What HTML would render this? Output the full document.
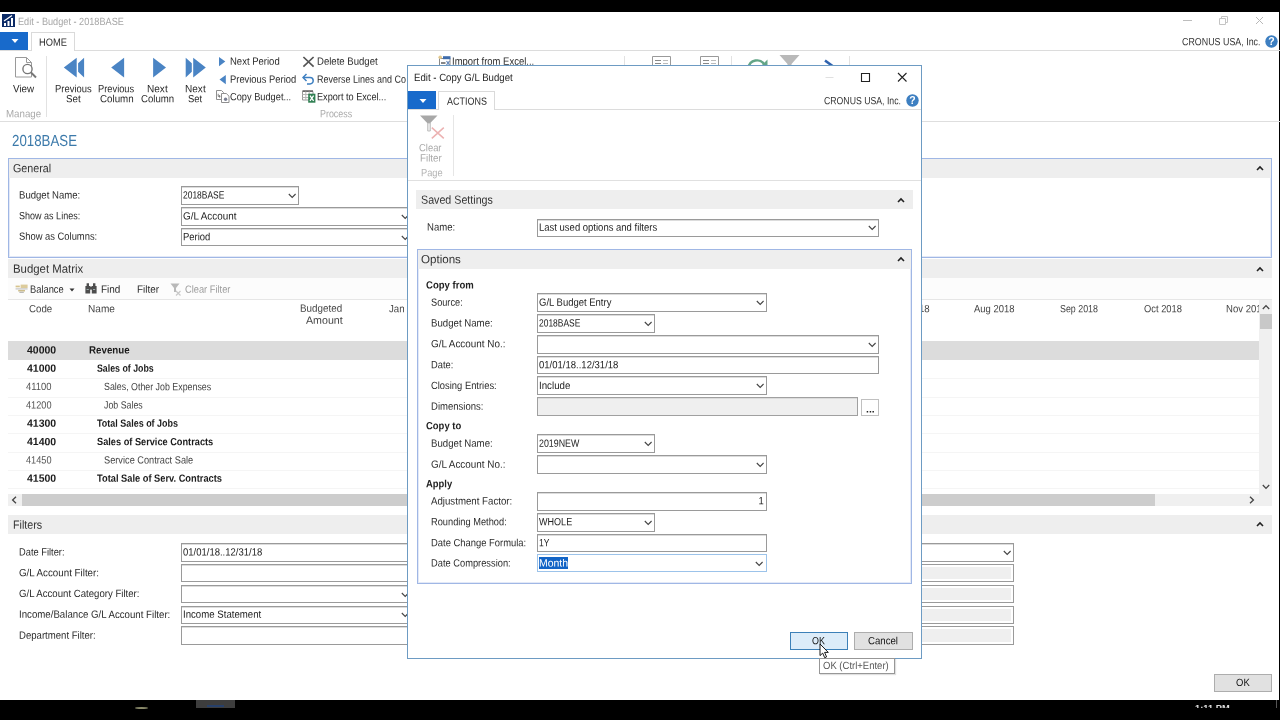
<!DOCTYPE html>
<html lang="en"><head><meta charset="utf-8"><title>Edit - Budget - 2018BASE</title>
<style>
html,body{margin:0;padding:0;background:#fff;}
body{width:1280px;height:720px;position:relative;overflow:hidden;font-family:"Liberation Sans",sans-serif;}
.b{position:absolute;display:block;}
.t{position:absolute;white-space:nowrap;line-height:1;display:block;}
#w{position:absolute;left:0;top:0;width:1280px;height:720px;will-change:transform;}
</style></head>
<body>
<div id="w">
<div class="b" style="left:0px;top:0px;width:1280px;height:12px;background:#000;"></div>
<div class="b" style="left:0px;top:700px;width:1280px;height:20px;background:#000;"></div>
<div class="b" style="left:196px;top:700px;width:38.5px;height:8px;background:#3d3d3d;"></div>
<div class="b" style="left:207px;top:705px;width:17px;height:2px;background:#27406a;"></div>
<div class="b" style="left:1279px;top:12px;width:1px;height:688px;background:#000;"></div>
<svg class="b" style="left:2px;top:14px;" width="13" height="13" viewBox="0 0 13 13"><rect x="0" y="0" width="13" height="13" fill="#0b2a66"/><path d="M2 12V9h2v3zM5.5 12V7h2v5zM9 12V4h2v8z" fill="#fff"/><path d="M2 7L10 1.5" stroke="#fff" stroke-width="1.2"/></svg>
<span class="t" style="left:18.20px;top:16.00px;font-size:10.5px;color:#a6a6a6;transform:matrix(0.8723,0.0005,0,1,0,0.03);transform-origin:0 50%;">Edit - Budget - 2018BASE</span>
<svg class="b" style="left:1180px;top:14px;" width="90" height="14" viewBox="0 0 90 14"><path d="M3 6.5h9" stroke="#bdbdbd" stroke-width="1"/><path d="M39.5 4.5h6v6h-6z M41.5 4.5v-2h6v6h-2" stroke="#c4c4c4" fill="none" stroke-width="1"/><path d="M76 3l7 7M83 3l-7 7" stroke="#b8b8b8" stroke-width="1"/></svg>
<div class="b" style="left:0px;top:32px;width:28px;height:18px;background:#186acb;"></div>
<svg class="b" style="left:11px;top:38px;" width="8" height="6" viewBox="0 0 8 6"><path d="M0.5 1h7L4 5z" fill="#fff"/></svg>
<div class="b" style="left:0px;top:50px;width:1280px;height:1px;background:#dcdcdc;"></div>
<div class="b" style="left:31px;top:32px;width:44px;height:19px;background:#fff;border:1px solid #dadada;box-sizing:border-box;border-bottom:none;"></div>
<span class="t" style="left:39.10px;top:36.00px;font-size:10.5px;color:#2b2b2b;transform:matrix(0.8889,0.0005,0,1,0,0.63);transform-origin:0 50%;">HOME</span>
<span class="t" style="left:1182.40px;top:36.00px;font-size:10.5px;color:#333;transform:matrix(0.8461,0.0005,0,1,0,0.13);transform-origin:0 50%;">CRONUS USA, Inc.</span>
<svg class="b" style="left:1264px;top:34px;" width="15" height="15" viewBox="0 0 15 15"><circle cx="7.5" cy="7.5" r="6.2" fill="#3d7fc1"/><text x="7.5" y="11.3" font-size="10.5" font-weight="bold" fill="#fff" text-anchor="middle" font-family="Liberation Sans, sans-serif">?</text></svg>
<div class="b" style="left:0px;top:121px;width:1280px;height:1px;background:#dedede;"></div>
<div class="b" style="left:46px;top:56px;width:1px;height:61px;background:#e2e2e2;"></div>
<svg class="b" style="left:14px;top:56px;" width="24" height="24" viewBox="0 0 24 24"><path d="M1.5 1.5h11l5 5v14.5h-16z" fill="#fff" stroke="#9a9a9a" stroke-width="1"/><path d="M12.5 1.5v5h5" fill="none" stroke="#9a9a9a" stroke-width="1"/><circle cx="13.5" cy="13" r="4.6" fill="#fff" stroke="#777" stroke-width="1.4"/><path d="M17 16.5l5 5" stroke="#777" stroke-width="2"/></svg>
<span class="t" style="left:13.40px;top:83.00px;font-size:10.5px;color:#2b2b2b;transform:matrix(0.9390,0.0005,0,1,0,0.13);transform-origin:0 50%;">View</span>
<span class="t" style="left:6.40px;top:108.00px;font-size:10.5px;color:#aaa;transform:matrix(0.9275,0.0005,0,1,0,0.13);transform-origin:0 50%;">Manage</span>
<svg class="b" style="left:62px;top:56px;" width="26" height="24" viewBox="0 0 26 24"><path d="M1.8 11.5L14.7 1.7v19.7z M16.1 7.2L22.1 1.7v19.7L16.1 15.8z" fill="#4a84c4"/></svg>
<span class="t" style="left:54.90px;top:83.00px;font-size:10.5px;color:#2b2b2b;transform:matrix(0.8982,0.0005,0,1,0,0.13);transform-origin:0 50%;">Previous</span>
<span class="t" style="left:66.40px;top:93.00px;font-size:10.5px;color:#2b2b2b;transform:matrix(0.9324,0.0005,0,1,0,0.13);transform-origin:0 50%;">Set</span>
<svg class="b" style="left:109px;top:56px;" width="18" height="24" viewBox="0 0 18 24"><path d="M2.2 11.5L15.1 1.7v19.7z" fill="#4a84c4"/></svg>
<span class="t" style="left:98.40px;top:83.00px;font-size:10.5px;color:#2b2b2b;transform:matrix(0.8860,0.0005,0,1,0,0.13);transform-origin:0 50%;">Previous</span>
<span class="t" style="left:99.90px;top:93.00px;font-size:10.5px;color:#2b2b2b;transform:matrix(0.9313,0.0005,0,1,0,0.13);transform-origin:0 50%;">Column</span>
<svg class="b" style="left:150px;top:56px;" width="18" height="24" viewBox="0 0 18 24"><path d="M16 11.5L3.1 1.7v19.7z" fill="#4a84c4"/></svg>
<span class="t" style="left:147.40px;top:83.00px;font-size:10.5px;color:#2b2b2b;transform:matrix(0.9586,0.0005,0,1,0,0.13);transform-origin:0 50%;">Next</span>
<span class="t" style="left:141.40px;top:93.00px;font-size:10.5px;color:#2b2b2b;transform:matrix(0.9174,0.0005,0,1,0,0.13);transform-origin:0 50%;">Column</span>
<svg class="b" style="left:183px;top:56px;" width="26" height="24" viewBox="0 0 26 24"><path d="M22.8 11.5L10.2 1.7v19.7z M8.8 7.2L2.7 1.7v19.7L8.8 15.8z" fill="#4a84c4"/></svg>
<span class="t" style="left:184.90px;top:83.00px;font-size:10.5px;color:#2b2b2b;transform:matrix(0.9586,0.0005,0,1,0,0.13);transform-origin:0 50%;">Next</span>
<span class="t" style="left:188.40px;top:93.00px;font-size:10.5px;color:#2b2b2b;transform:matrix(0.9007,0.0005,0,1,0,0.13);transform-origin:0 50%;">Set</span>
<svg class="b" style="left:219px;top:57px;" width="7" height="10" viewBox="0 0 7 10"><path d="M0 0L6.3 4.6L0 9.2z" fill="#4a84c4"/></svg>
<span class="t" style="left:230.40px;top:55.00px;font-size:10.5px;color:#2b2b2b;transform:matrix(0.9060,0.0005,0,1,0,0.63);transform-origin:0 50%;">Next Period</span>
<svg class="b" style="left:219px;top:74.5px;" width="7" height="10" viewBox="0 0 7 10"><path d="M6.8 0L0.5 4.6L6.8 9.2z" fill="#4a84c4"/></svg>
<span class="t" style="left:230.40px;top:73.00px;font-size:10.5px;color:#2b2b2b;transform:matrix(0.8931,0.0005,0,1,0,0.63);transform-origin:0 50%;">Previous Period</span>
<svg class="b" style="left:216px;top:90px;" width="14" height="13" viewBox="0 0 14 13"><path d="M0.5 0.5h5l2 2v7h-7z" fill="#fff" stroke="#8f8f8f"/><path d="M2.2 3.8v2.6h2.2M3.6 5v2.6" stroke="#777" stroke-width=".9" fill="none"/><path d="M5.5 3.5h4.8l2.7 2.7v6.3h-7.5z" fill="#fff" stroke="#8f8f8f"/><circle cx="9.6" cy="9.3" r="1.7" fill="#7a7f92"/></svg>
<span class="t" style="left:230.40px;top:91.00px;font-size:10.5px;color:#2b2b2b;transform:matrix(0.8810,0.0005,0,1,0,0.13);transform-origin:0 50%;">Copy Budget...</span>
<svg class="b" style="left:302px;top:56px;" width="13" height="12" viewBox="0 0 13 12"><path d="M1.4 1l10.2 9.6M11.6 1L1.4 10.6" stroke="#555" stroke-width="1.7"/></svg>
<span class="t" style="left:316.90px;top:55.00px;font-size:10.5px;color:#2b2b2b;transform:matrix(0.9119,0.0005,0,1,0,0.63);transform-origin:0 50%;">Delete Budget</span>
<svg class="b" style="left:302px;top:73px;" width="13" height="12" viewBox="0 0 13 12"><path d="M4.5 1L1 4.5L4.5 8" fill="none" stroke="#3d7fc1" stroke-width="1.5"/><path d="M1.5 4.5h6.5a3.2 3.2 0 0 1 0 6.4H5" fill="none" stroke="#3d7fc1" stroke-width="1.5"/></svg>
<span class="t" style="left:316.90px;top:73.00px;font-size:10.5px;color:#2b2b2b;transform:matrix(0.8565,0.0005,0,1,0,0.63);transform-origin:0 50%;">Reverse Lines and Co</span>
<svg class="b" style="left:302px;top:90px;" width="14" height="13" viewBox="0 0 14 13"><path d="M0.5 1.5h10.5v8.5h-10.5z" fill="#fff" stroke="#999"/><path d="M0.5 1h10.5" stroke="#555" stroke-width="1.4"/><path d="M0.5 4.5h10.5M0.5 7.5h6M3.8 1.5v8.5M7.2 1.5v3" stroke="#b5b5b5"/><rect x="6.2" y="3.7" width="7.2" height="9" fill="#2f7f52"/><path d="M8 5.6l3.6 5.2M11.6 5.6L8 10.8" stroke="#fff" stroke-width="1.3"/></svg>
<span class="t" style="left:316.90px;top:91.00px;font-size:10.5px;color:#2b2b2b;transform:matrix(0.8718,0.0005,0,1,0,0.13);transform-origin:0 50%;">Export to Excel...</span>
<span class="t" style="left:320.40px;top:108.00px;font-size:10.5px;color:#aaa;transform:matrix(0.8488,0.0005,0,1,0,0.13);transform-origin:0 50%;">Process</span>
<svg class="b" style="left:438px;top:55px;" width="13" height="12" viewBox="0 0 13 12"><path d="M1.5 3.5h10.5v8h-10.5z" fill="#fff" stroke="#8a8a8a"/><rect x="5" y="1.2" width="7.5" height="3" fill="#3f6cab"/><path d="M3 8h4.5" stroke="#444" stroke-width="1.3"/><path d="M8.5 6l3 4M11.5 6l-3 4" stroke="#5a7fb5" stroke-width="1.1"/><circle cx="2.2" cy="2.2" r="1.8" fill="#e3c98e"/></svg>
<span class="t" style="left:452.40px;top:55.00px;font-size:10.5px;color:#2b2b2b;transform:matrix(0.9030,0.0005,0,1,0,0.63);transform-origin:0 50%;">Import from Excel...</span>
<div class="b" style="left:624px;top:56px;width:1px;height:61px;background:#e2e2e2;"></div>
<svg class="b" style="left:652px;top:56px;" width="19" height="12" viewBox="0 0 19 12"><path d="M0.5 0.5h18v12h-18z" fill="#fff" stroke="#9a9a9a"/><path d="M3 4.5h6M3 7.5h6" stroke="#888"/><path d="M11 4.5h5M11 7.5h5" stroke="#bbb"/></svg>
<svg class="b" style="left:700px;top:56px;" width="19" height="12" viewBox="0 0 19 12"><path d="M0.5 0.5h18v12h-18z" fill="#fff" stroke="#9a9a9a"/><path d="M3 4.5h6M3 7.5h6" stroke="#888"/><path d="M11 4.5h5M11 7.5h5" stroke="#bbb"/></svg>
<div class="b" style="left:731px;top:56px;width:1px;height:61px;background:#e2e2e2;"></div>
<svg class="b" style="left:746px;top:55px;" width="24" height="14" viewBox="0 0 24 14"><path d="M2.5 13a8.5 8.5 0 0 1 16-3" fill="none" stroke="#63a587" stroke-width="2.4"/><path d="M21.5 4.5v7h-7z" fill="#63a587"/></svg>
<svg class="b" style="left:779px;top:54px;" width="22" height="14" viewBox="0 0 22 14"><path d="M0.5 1h20l-8 9v4h-4v-4z" fill="#b9b9b9"/></svg>
<svg class="b" style="left:822px;top:58px;" width="16" height="10" viewBox="0 0 16 10"><path d="M3 2.5l11 8" stroke="#2f62ae" stroke-width="2.6"/></svg>
<div class="b" style="left:849px;top:56px;width:1px;height:61px;background:#e2e2e2;"></div>
<span class="t" style="left:11.90px;top:133.00px;font-size:16px;color:#3b79aa;transform:matrix(0.8303,0.0005,0,1,0,0.00);transform-origin:0 50%;">2018BASE</span>
<div class="b" style="left:8px;top:158px;width:1264px;height:100px;background:#fff;border:1px solid #a0b7e5;box-sizing:border-box;box-shadow:inset 0 0 0 1px #e3e9f7;"></div>
<div class="b" style="left:9px;top:159px;width:1262px;height:19px;background:#eeeeee;"></div>
<span class="t" style="left:13.40px;top:163.00px;font-size:11.9px;color:#333;transform:matrix(0.9028,0.0005,0,1,0,0.13);transform-origin:0 50%;">General</span>
<svg class="b" style="left:1256px;top:165px;" width="8" height="7" viewBox="0 0 8 7"><path d="M1 5L4 2L7 5" fill="none" stroke="#222" stroke-width="1.6"/></svg>
<span class="t" style="left:18.90px;top:189.00px;font-size:10.5px;color:#2b2b2b;transform:matrix(0.9117,0.0005,0,1,0,0.43);transform-origin:0 50%;">Budget Name:</span>
<div class="b" style="left:181px;top:186px;width:118px;height:19px;background:#fff;border:1px solid #9a9a9a;box-sizing:border-box;box-shadow:inset 0 1px 0 #dcdcdc;"></div>
<svg class="b" style="left:287.5px;top:193.04999999999998px;" width="8.4" height="6" viewBox="0 0 8.4 6"><path d="M0.8 1l3.4 3.4L7.6 1" fill="none" stroke="#444" stroke-width="1.1"/></svg>
<span class="t" style="left:183.20px;top:189.00px;font-size:10.5px;color:#222;transform:matrix(0.8058,0.0005,0,1,0,0.58);transform-origin:0 50%;">2018BASE</span>
<span class="t" style="left:18.90px;top:210.00px;font-size:10.5px;color:#2b2b2b;transform:matrix(0.8593,0.0005,0,1,0,0.13);transform-origin:0 50%;">Show as Lines:</span>
<div class="b" style="left:181px;top:207px;width:231px;height:19px;background:#fff;border:1px solid #9a9a9a;box-sizing:border-box;box-shadow:inset 0 1px 0 #dcdcdc;"></div>
<svg class="b" style="left:400.5px;top:213.9px;" width="8.4" height="6" viewBox="0 0 8.4 6"><path d="M0.8 1l3.4 3.4L7.6 1" fill="none" stroke="#444" stroke-width="1.1"/></svg>
<span class="t" style="left:183.20px;top:210.00px;font-size:10.5px;color:#222;transform:matrix(0.9399,0.0005,0,1,0,0.43);transform-origin:0 50%;">G/L Account</span>
<span class="t" style="left:18.90px;top:230.00px;font-size:10.5px;color:#2b2b2b;transform:matrix(0.8932,0.0005,0,1,0,0.63);transform-origin:0 50%;">Show as Columns:</span>
<div class="b" style="left:181px;top:228px;width:231px;height:18px;background:#fff;border:1px solid #9a9a9a;box-sizing:border-box;box-shadow:inset 0 1px 0 #dcdcdc;"></div>
<svg class="b" style="left:400.5px;top:234.70000000000002px;" width="8.4" height="6" viewBox="0 0 8.4 6"><path d="M0.8 1l3.4 3.4L7.6 1" fill="none" stroke="#444" stroke-width="1.1"/></svg>
<span class="t" style="left:183.20px;top:231.00px;font-size:10.5px;color:#222;transform:matrix(0.9025,0.0005,0,1,0,0.23);transform-origin:0 50%;">Period</span>
<div class="b" style="left:8px;top:258.5px;width:1264px;height:19.69999999999999px;background:#eeeeee;"></div>
<span class="t" style="left:13.40px;top:263.00px;font-size:11.9px;color:#333;transform:matrix(0.9569,0.0005,0,1,0,0.63);transform-origin:0 50%;">Budget Matrix</span>
<svg class="b" style="left:1256px;top:265.5px;" width="8" height="7" viewBox="0 0 8 7"><path d="M1 5L4 2L7 5" fill="none" stroke="#222" stroke-width="1.6"/></svg>
<div class="b" style="left:8px;top:278.2px;width:1264px;height:20.80000000000001px;background:#fcfcfc;"></div>
<svg class="b" style="left:15px;top:284px;" width="14" height="10" viewBox="0 0 14 10"><rect x="0.6" y="1.6" width="4.2" height="1.7" fill="#d6c38c"/><rect x="5.6" y="0.6" width="7" height="3.4" fill="#dccb9b"/><rect x="0.6" y="4.4" width="12" height="1" fill="#b9b9b9"/><rect x="3.2" y="5.9" width="6.8" height="1.6" fill="#cdbd8a"/><rect x="4.4" y="7.8" width="4.4" height="1" fill="#a9a9a9"/></svg>
<span class="t" style="left:29.90px;top:283.00px;font-size:10.5px;color:#2b2b2b;transform:matrix(0.8879,0.0005,0,1,0,0.63);transform-origin:0 50%;">Balance</span>
<svg class="b" style="left:69px;top:288px;" width="6" height="4" viewBox="0 0 6 4"><path d="M0.5 0.5h5L3 3.5z" fill="#333"/></svg>
<svg class="b" style="left:85px;top:283px;" width="13" height="11" viewBox="0 0 13 11"><path d="M1.6 0.3h2.4v2.7h1.2v7.6H0.4V3h1.2z M8 0.3h2.4v2.7h1.2v7.6H6.8V3H8z" fill="#4d4d4d"/><rect x="5" y="3.6" width="2" height="3" fill="#4d4d4d"/><path d="M1.6 6.5h2.2M8 6.5h2.2" stroke="#9aa" stroke-width="1"/></svg>
<span class="t" style="left:101.20px;top:283.00px;font-size:10.5px;color:#2b2b2b;transform:matrix(0.9492,0.0005,0,1,0,0.63);transform-origin:0 50%;">Find</span>
<span class="t" style="left:136.90px;top:283.00px;font-size:10.5px;color:#2b2b2b;transform:matrix(0.9424,0.0005,0,1,0,0.63);transform-origin:0 50%;">Filter</span>
<svg class="b" style="left:170px;top:283px;" width="12" height="13" viewBox="0 0 12 13"><path d="M0.5 0.5h9l-3.5 4.5v4h-2v-4z" fill="#b9b9b9"/><path d="M6 8l4.5 4.5M10.5 8L6 12.5" stroke="#c9c9c9" stroke-width="1.2"/></svg>
<span class="t" style="left:185.20px;top:283.00px;font-size:10.5px;color:#9b9b9b;transform:matrix(0.8842,0.0005,0,1,0,0.63);transform-origin:0 50%;">Clear Filter</span>
<div class="b" style="left:8px;top:298.5px;width:1264px;height:1.0px;background:#e6e6e6;"></div>
<div class="b" style="left:8px;top:299.5px;width:1251px;height:194.0px;background:#fff;"></div>
<span class="t" style="left:29.40px;top:303.00px;font-size:10.5px;color:#454545;transform:matrix(0.9240,0.0005,0,1,0,0.13);transform-origin:0 50%;">Code</span>
<span class="t" style="left:88.20px;top:303.00px;font-size:10.5px;color:#454545;transform:matrix(0.9602,0.0005,0,1,0,0.13);transform-origin:0 50%;">Name</span>
<span class="t" style="left:300.20px;top:302.00px;font-size:10.5px;color:#454545;transform:matrix(0.9384,0.0005,0,1,0,0.83);transform-origin:0 50%;">Budgeted</span>
<span class="t" style="left:305.70px;top:314.00px;font-size:10.5px;color:#454545;transform:matrix(1.0142,0.0005,0,1,0,0.73);transform-origin:0 50%;">Amount</span>
<span class="t" style="left:389.40px;top:303.00px;font-size:10.5px;color:#454545;transform:matrix(0.9200,0.0005,0,1,0,0.13);transform-origin:0 50%;">Jan 2018</span>
<span class="t" style="left:890.30px;top:303.00px;font-size:10.5px;color:#454545;transform:matrix(0.9200,0.0005,0,1,0,0.13);transform-origin:100% 50%;">Jul 2018</span>
<span class="t" style="left:973.90px;top:303.00px;font-size:10.5px;color:#454545;transform:matrix(0.9006,0.0005,0,1,0,0.13);transform-origin:0 50%;">Aug 2018</span>
<span class="t" style="left:1060.20px;top:303.00px;font-size:10.5px;color:#454545;transform:matrix(0.8450,0.0005,0,1,0,0.13);transform-origin:0 50%;">Sep 2018</span>
<span class="t" style="left:1144.40px;top:303.00px;font-size:10.5px;color:#454545;transform:matrix(0.8915,0.0005,0,1,0,0.13);transform-origin:0 50%;">Oct 2018</span>
<span class="t" style="left:1225.70px;top:303.00px;font-size:10.5px;color:#454545;transform:matrix(0.9098,0.0005,0,1,0,0.13);transform-origin:0 50%;">Nov 2018</span>
<div class="b" style="left:8px;top:341px;width:1251px;height:18.600000000000023px;background:#dcdcdc;"></div>
<div class="b" style="left:8px;top:378.0px;width:1251px;height:1.0px;background:#f5f5f5;"></div>
<div class="b" style="left:8px;top:396.5px;width:1251px;height:1.0px;background:#f5f5f5;"></div>
<div class="b" style="left:8px;top:414.5px;width:1251px;height:1.0px;background:#f5f5f5;"></div>
<div class="b" style="left:8px;top:433.0px;width:1251px;height:1.0px;background:#f5f5f5;"></div>
<div class="b" style="left:8px;top:451.5px;width:1251px;height:1.0px;background:#f5f5f5;"></div>
<div class="b" style="left:8px;top:469.5px;width:1251px;height:1.0px;background:#f5f5f5;"></div>
<div class="b" style="left:8px;top:488.0px;width:1251px;height:1.0px;background:#f5f5f5;"></div>
<span class="t" style="left:26.90px;top:344.00px;font-size:10.5px;color:#1a1a1a;transform:matrix(0.9999,0.0005,0,1,0,0.42);transform-origin:0 50%;font-weight:bold;">40000</span>
<span class="t" style="left:89.20px;top:344.00px;font-size:10.5px;color:#1a1a1a;transform:matrix(0.9296,0.0005,0,1,0,0.42);transform-origin:0 50%;font-weight:bold;">Revenue</span>
<span class="t" style="left:26.90px;top:362.00px;font-size:10.5px;color:#1a1a1a;transform:matrix(0.9999,0.0005,0,1,0,0.76);transform-origin:0 50%;font-weight:bold;">41000</span>
<span class="t" style="left:96.90px;top:362.00px;font-size:10.5px;color:#1a1a1a;transform:matrix(0.8375,0.0005,0,1,0,0.76);transform-origin:0 50%;font-weight:bold;">Sales of Jobs</span>
<span class="t" style="left:26.40px;top:381.00px;font-size:10.5px;color:#555;transform:matrix(0.8972,0.0005,0,1,0,0.11);transform-origin:0 50%;">41100</span>
<span class="t" style="left:104.40px;top:381.00px;font-size:10.5px;color:#444;transform:matrix(0.8424,0.0005,0,1,0,0.11);transform-origin:0 50%;">Sales, Other Job Expenses</span>
<span class="t" style="left:26.40px;top:399.00px;font-size:10.5px;color:#555;transform:matrix(0.8732,0.0005,0,1,0,0.45);transform-origin:0 50%;">41200</span>
<span class="t" style="left:104.40px;top:399.00px;font-size:10.5px;color:#444;transform:matrix(0.8390,0.0005,0,1,0,0.45);transform-origin:0 50%;">Job Sales</span>
<span class="t" style="left:26.90px;top:417.00px;font-size:10.5px;color:#1a1a1a;transform:matrix(0.9999,0.0005,0,1,0,0.78);transform-origin:0 50%;font-weight:bold;">41300</span>
<span class="t" style="left:96.90px;top:417.00px;font-size:10.5px;color:#1a1a1a;transform:matrix(0.8533,0.0005,0,1,0,0.78);transform-origin:0 50%;font-weight:bold;">Total Sales of Jobs</span>
<span class="t" style="left:26.90px;top:436.00px;font-size:10.5px;color:#1a1a1a;transform:matrix(0.9999,0.0005,0,1,0,0.12);transform-origin:0 50%;font-weight:bold;">41400</span>
<span class="t" style="left:96.90px;top:436.00px;font-size:10.5px;color:#1a1a1a;transform:matrix(0.8771,0.0005,0,1,0,0.12);transform-origin:0 50%;font-weight:bold;">Sales of Service Contracts</span>
<span class="t" style="left:26.40px;top:454.00px;font-size:10.5px;color:#555;transform:matrix(0.8732,0.0005,0,1,0,0.47);transform-origin:0 50%;">41450</span>
<span class="t" style="left:104.40px;top:454.00px;font-size:10.5px;color:#444;transform:matrix(0.8784,0.0005,0,1,0,0.47);transform-origin:0 50%;">Service Contract Sale</span>
<span class="t" style="left:26.90px;top:472.00px;font-size:10.5px;color:#1a1a1a;transform:matrix(0.9999,0.0005,0,1,0,0.80);transform-origin:0 50%;font-weight:bold;">41500</span>
<span class="t" style="left:96.90px;top:472.00px;font-size:10.5px;color:#1a1a1a;transform:matrix(0.8840,0.0005,0,1,0,0.80);transform-origin:0 50%;font-weight:bold;">Total Sale of Serv. Contracts</span>
<div class="b" style="left:1259px;top:299.5px;width:13px;height:194.0px;background:#f0f0f0;"></div>
<svg class="b" style="left:1261.5px;top:303.5px;" width="8" height="6" viewBox="0 0 8 6"><path d="M0.8 5L4 1.6L7.2 5" fill="none" stroke="#444" stroke-width="1.3"/></svg>
<div class="b" style="left:1259.5px;top:313.7px;width:12.0px;height:15.0px;background:#c8c8c8;"></div>
<svg class="b" style="left:1261.5px;top:483.5px;" width="8" height="6" viewBox="0 0 8 6"><path d="M0.8 1L4 4.4L7.2 1" fill="none" stroke="#444" stroke-width="1.3"/></svg>
<div class="b" style="left:8px;top:493.7px;width:1264px;height:12.0px;background:#f0f0f0;"></div>
<div class="b" style="left:22px;top:493.7px;width:1133px;height:12.0px;background:#cdcdcd;"></div>
<svg class="b" style="left:11px;top:495.5px;" width="6" height="8" viewBox="0 0 6 8"><path d="M5 0.8L1.6 4L5 7.2" fill="none" stroke="#444" stroke-width="1.3"/></svg>
<svg class="b" style="left:1249px;top:495.5px;" width="6" height="8" viewBox="0 0 6 8"><path d="M1 0.8L4.4 4L1 7.2" fill="none" stroke="#444" stroke-width="1.3"/></svg>
<div class="b" style="left:8px;top:515px;width:1264px;height:19px;background:#eeeeee;"></div>
<span class="t" style="left:13.40px;top:519.00px;font-size:11.9px;color:#333;transform:matrix(0.9019,0.0005,0,1,0,0.63);transform-origin:0 50%;">Filters</span>
<svg class="b" style="left:1256px;top:521px;" width="8" height="7" viewBox="0 0 8 7"><path d="M1 5L4 2L7 5" fill="none" stroke="#222" stroke-width="1.6"/></svg>
<span class="t" style="left:18.90px;top:546.00px;font-size:10.5px;color:#2b2b2b;transform:matrix(0.8859,0.0005,0,1,0,0.43);transform-origin:0 50%;">Date Filter:</span>
<div class="b" style="left:181px;top:543px;width:231px;height:19px;background:#fff;border:1px solid #9a9a9a;box-sizing:border-box;box-shadow:inset 0 1px 0 #dcdcdc;"></div>
<span class="t" style="left:183.20px;top:546.00px;font-size:10.5px;color:#222;transform:matrix(0.9042,0.0005,0,1,0,0.43);transform-origin:0 50%;">01/01/18..12/31/18</span>
<div class="b" style="left:900px;top:543px;width:114px;height:19px;background:#fff;border:1px solid #9a9a9a;box-sizing:border-box;box-shadow:inset 0 1px 0 #dcdcdc;"></div>
<svg class="b" style="left:1002.5px;top:549.9px;" width="8.4" height="6" viewBox="0 0 8.4 6"><path d="M0.8 1l3.4 3.4L7.6 1" fill="none" stroke="#444" stroke-width="1.1"/></svg>
<span class="t" style="left:18.90px;top:567.00px;font-size:10.5px;color:#2b2b2b;transform:matrix(0.9304,0.0005,0,1,0,0.23);transform-origin:0 50%;">G/L Account Filter:</span>
<div class="b" style="left:181px;top:564px;width:231px;height:18px;background:#fff;border:1px solid #9a9a9a;box-sizing:border-box;box-shadow:inset 0 1px 0 #dcdcdc;"></div>
<div class="b" style="left:900px;top:564px;width:114px;height:18px;background:#efefef;border:1px solid #9a9a9a;box-sizing:border-box;box-shadow:inset 0 0 0 2px #fff;"></div>
<span class="t" style="left:18.90px;top:588.00px;font-size:10.5px;color:#2b2b2b;transform:matrix(0.9162,0.0005,0,1,0,0.03);transform-origin:0 50%;">G/L Account Category Filter:</span>
<div class="b" style="left:181px;top:585px;width:231px;height:18px;background:#fff;border:1px solid #9a9a9a;box-sizing:border-box;box-shadow:inset 0 1px 0 #dcdcdc;"></div>
<svg class="b" style="left:400.5px;top:591.5000000000001px;" width="8.4" height="6" viewBox="0 0 8.4 6"><path d="M0.8 1l3.4 3.4L7.6 1" fill="none" stroke="#444" stroke-width="1.1"/></svg>
<div class="b" style="left:900px;top:585px;width:114px;height:18px;background:#efefef;border:1px solid #9a9a9a;box-sizing:border-box;box-shadow:inset 0 0 0 2px #fff;"></div>
<span class="t" style="left:18.90px;top:608.00px;font-size:10.5px;color:#2b2b2b;transform:matrix(0.9214,0.0005,0,1,0,0.83);transform-origin:0 50%;">Income/Balance G/L Account Filter:</span>
<div class="b" style="left:181px;top:606px;width:231px;height:18px;background:#fff;border:1px solid #9a9a9a;box-sizing:border-box;box-shadow:inset 0 1px 0 #dcdcdc;"></div>
<svg class="b" style="left:400.5px;top:612.3000000000001px;" width="8.4" height="6" viewBox="0 0 8.4 6"><path d="M0.8 1l3.4 3.4L7.6 1" fill="none" stroke="#444" stroke-width="1.1"/></svg>
<span class="t" style="left:183.20px;top:608.00px;font-size:10.5px;color:#222;transform:matrix(0.9176,0.0005,0,1,0,0.83);transform-origin:0 50%;">Income Statement</span>
<div class="b" style="left:900px;top:606px;width:114px;height:18px;background:#efefef;border:1px solid #9a9a9a;box-sizing:border-box;box-shadow:inset 0 0 0 2px #fff;"></div>
<span class="t" style="left:18.90px;top:629.00px;font-size:10.5px;color:#2b2b2b;transform:matrix(0.9128,0.0005,0,1,0,0.63);transform-origin:0 50%;">Department Filter:</span>
<div class="b" style="left:181px;top:626px;width:231px;height:19px;background:#fff;border:1px solid #9a9a9a;box-sizing:border-box;box-shadow:inset 0 1px 0 #dcdcdc;"></div>
<div class="b" style="left:900px;top:626px;width:114px;height:19px;background:#efefef;border:1px solid #9a9a9a;box-sizing:border-box;box-shadow:inset 0 0 0 2px #fff;"></div>
<div class="b" style="left:1213.7px;top:673.7px;width:58.299999999999955px;height:18.0px;background:#e1e1e1;border:1px solid #adadad;box-sizing:border-box;"></div>
<span class="t" style="left:1235.70px;top:676.00px;font-size:10.5px;color:#111;transform:matrix(0.9030,0.0005,0,1,0,0.93);transform-origin:0 50%;">OK</span>
<span class="t" style="left:1195.40px;top:704.00px;font-size:9px;color:#ddd;transform:matrix(1.0349,0.0005,0,1,0,0.23);transform-origin:0 50%;font-weight:bold;">1:11 PM</span>
<div class="b" style="left:1190px;top:708px;width:50px;height:12px;background:#000;"></div>
<div class="b" style="left:1276px;top:700px;width:1px;height:8px;background:#555;"></div>
<div class="b" style="left:135px;top:707px;width:13px;height:2px;background:#8a8a6a;border-radius:50%;"></div>
<div class="b" style="left:407px;top:65px;width:515px;height:594px;background:#fff;border:1px solid #6d9bc3;box-sizing:border-box;"></div>
<span class="t" style="left:413.90px;top:72.00px;font-size:10.5px;color:#1f1f1f;transform:matrix(0.9173,0.0005,0,1,0,0.03);transform-origin:0 50%;">Edit - Copy G/L Budget</span>
<svg class="b" style="left:822px;top:70px;" width="90" height="14" viewBox="0 0 90 14"><path d="M3.5 7.5h8" stroke="#e0e0e0"/><path d="M39.5 3.5h8v8h-8z" fill="none" stroke="#222" stroke-width="1.1"/><path d="M76 3l8.5 8.5M84.5 3L76 11.5" stroke="#222" stroke-width="1.1"/></svg>
<div class="b" style="left:408px;top:91px;width:28px;height:18px;background:#186acb;"></div>
<svg class="b" style="left:418.5px;top:97.5px;" width="8" height="6" viewBox="0 0 8 6"><path d="M0.5 1h7L4 5z" fill="#fff"/></svg>
<div class="b" style="left:408px;top:109px;width:513px;height:1px;background:#dcdcdc;"></div>
<div class="b" style="left:438px;top:91px;width:57px;height:19px;background:#fff;border:1px solid #dadada;box-sizing:border-box;border-bottom:none;"></div>
<span class="t" style="left:446.70px;top:95.00px;font-size:10.5px;color:#2b2b2b;transform:matrix(0.8549,0.0005,0,1,0,0.63);transform-origin:0 50%;">ACTIONS</span>
<span class="t" style="left:823.90px;top:95.00px;font-size:10.5px;color:#333;transform:matrix(0.8299,0.0005,0,1,0,0.13);transform-origin:0 50%;">CRONUS USA, Inc.</span>
<svg class="b" style="left:904.5px;top:93px;" width="15" height="15" viewBox="0 0 15 15"><circle cx="7.5" cy="7.5" r="6.2" fill="#3d7fc1"/><text x="7.5" y="11.3" font-size="10.5" font-weight="bold" fill="#fff" text-anchor="middle" font-family="Liberation Sans, sans-serif">?</text></svg>
<svg class="b" style="left:419px;top:114px;" width="27" height="26" viewBox="0 0 27 26"><path d="M1 1.5h17.5l-7.2 7.5h-3.1z" fill="#a8a8a8"/><path d="M8.7 9h2.6v8h-2.6z" fill="#eee" stroke="#b0b0b0" stroke-width=".8"/><path d="M12.8 13.6l12 10.8M24.8 13.6l-12 10.8" stroke="#ecb2b2" stroke-width="1.5"/></svg>
<span class="t" style="left:419.40px;top:142.00px;font-size:10.5px;color:#a9a9a9;transform:matrix(0.8966,0.0005,0,1,0,0.13);transform-origin:0 50%;">Clear</span>
<span class="t" style="left:420.20px;top:152.00px;font-size:10.5px;color:#a9a9a9;transform:matrix(0.9296,0.0005,0,1,0,0.43);transform-origin:0 50%;">Filter</span>
<span class="t" style="left:421.40px;top:167.00px;font-size:10.5px;color:#b3b3b3;transform:matrix(0.8846,0.0005,0,1,0,0.13);transform-origin:0 50%;">Page</span>
<div class="b" style="left:453px;top:115px;width:1px;height:61px;background:#e6e6e6;"></div>
<div class="b" style="left:408px;top:180px;width:513px;height:1px;background:#e0e0e0;"></div>
<div class="b" style="left:416px;top:190px;width:496.5px;height:19px;background:#eeeeee;"></div>
<span class="t" style="left:421.20px;top:194.00px;font-size:11.9px;color:#333;transform:matrix(0.8989,0.0005,0,1,0,0.63);transform-origin:0 50%;">Saved Settings</span>
<svg class="b" style="left:896.8px;top:196.5px;" width="8" height="7" viewBox="0 0 8 7"><path d="M1 5L4 2L7 5" fill="none" stroke="#222" stroke-width="1.6"/></svg>
<span class="t" style="left:426.90px;top:221.00px;font-size:10.5px;color:#2b2b2b;transform:matrix(0.9115,0.0005,0,1,0,0.43);transform-origin:0 50%;">Name:</span>
<div class="b" style="left:537px;top:219px;width:342px;height:18px;background:#fff;border:1px solid #9a9a9a;box-sizing:border-box;box-shadow:inset 0 1px 0 #dcdcdc;"></div>
<svg class="b" style="left:867.5px;top:225.2px;" width="8.4" height="6" viewBox="0 0 8.4 6"><path d="M0.8 1l3.4 3.4L7.6 1" fill="none" stroke="#444" stroke-width="1.1"/></svg>
<span class="t" style="left:539.20px;top:221.00px;font-size:10.5px;color:#222;transform:matrix(0.9040,0.0005,0,1,0,0.73);transform-origin:0 50%;">Last used options and filters</span>
<div class="b" style="left:417px;top:249px;width:495px;height:335px;background:#fff;border:1px solid #a0b7e5;box-sizing:border-box;box-shadow:inset 0 0 0 1px #e3e9f7;"></div>
<div class="b" style="left:418px;top:250px;width:493px;height:19px;background:#eeeeee;"></div>
<span class="t" style="left:421.20px;top:254.00px;font-size:11.9px;color:#333;transform:matrix(0.9735,0.0005,0,1,0,0.13);transform-origin:0 50%;">Options</span>
<svg class="b" style="left:896.8px;top:256px;" width="8" height="7" viewBox="0 0 8 7"><path d="M1 5L4 2L7 5" fill="none" stroke="#222" stroke-width="1.6"/></svg>
<span class="t" style="left:425.90px;top:279.00px;font-size:10.5px;color:#222;transform:matrix(0.9086,0.0005,0,1,0,0.42);transform-origin:0 50%;font-weight:bold;">Copy from</span>
<span class="t" style="left:430.90px;top:296.00px;font-size:10.5px;color:#2b2b2b;transform:matrix(0.8760,0.0005,0,1,0,0.73);transform-origin:0 50%;">Source:</span>
<div class="b" style="left:537px;top:293px;width:230px;height:19px;background:#fff;border:1px solid #9a9a9a;box-sizing:border-box;box-shadow:inset 0 1px 0 #dcdcdc;"></div>
<svg class="b" style="left:755.5px;top:300.20000000000005px;" width="8.4" height="6" viewBox="0 0 8.4 6"><path d="M0.8 1l3.4 3.4L7.6 1" fill="none" stroke="#444" stroke-width="1.1"/></svg>
<span class="t" style="left:539.20px;top:296.00px;font-size:10.5px;color:#222;transform:matrix(0.9032,0.0005,0,1,0,0.73);transform-origin:0 50%;">G/L Budget Entry</span>
<span class="t" style="left:430.90px;top:317.00px;font-size:10.5px;color:#2b2b2b;transform:matrix(0.9192,0.0005,0,1,0,0.53);transform-origin:0 50%;">Budget Name:</span>
<div class="b" style="left:537px;top:314px;width:118px;height:19px;background:#fff;border:1px solid #9a9a9a;box-sizing:border-box;box-shadow:inset 0 1px 0 #dcdcdc;"></div>
<svg class="b" style="left:643.5px;top:321.00000000000006px;" width="8.4" height="6" viewBox="0 0 8.4 6"><path d="M0.8 1l3.4 3.4L7.6 1" fill="none" stroke="#444" stroke-width="1.1"/></svg>
<span class="t" style="left:539.20px;top:317.00px;font-size:10.5px;color:#222;transform:matrix(0.8058,0.0005,0,1,0,0.53);transform-origin:0 50%;">2018BASE</span>
<span class="t" style="left:430.90px;top:338.00px;font-size:10.5px;color:#2b2b2b;transform:matrix(0.9430,0.0005,0,1,0,0.33);transform-origin:0 50%;">G/L Account No.:</span>
<div class="b" style="left:537px;top:335px;width:342px;height:19px;background:#fff;border:1px solid #9a9a9a;box-sizing:border-box;box-shadow:inset 0 1px 0 #dcdcdc;"></div>
<svg class="b" style="left:867.5px;top:341.8px;" width="8.4" height="6" viewBox="0 0 8.4 6"><path d="M0.8 1l3.4 3.4L7.6 1" fill="none" stroke="#444" stroke-width="1.1"/></svg>
<span class="t" style="left:430.90px;top:359.00px;font-size:10.5px;color:#2b2b2b;transform:matrix(0.8881,0.0005,0,1,0,0.13);transform-origin:0 50%;">Date:</span>
<div class="b" style="left:537px;top:356px;width:342px;height:18px;background:#fff;border:1px solid #9a9a9a;box-sizing:border-box;box-shadow:inset 0 1px 0 #dcdcdc;"></div>
<span class="t" style="left:539.20px;top:359.00px;font-size:10.5px;color:#222;transform:matrix(0.9065,0.0005,0,1,0,0.13);transform-origin:0 50%;">01/01/18..12/31/18</span>
<span class="t" style="left:430.90px;top:379.00px;font-size:10.5px;color:#2b2b2b;transform:matrix(0.8935,0.0005,0,1,0,0.93);transform-origin:0 50%;">Closing Entries:</span>
<div class="b" style="left:537px;top:376px;width:230px;height:19px;background:#fff;border:1px solid #9a9a9a;box-sizing:border-box;box-shadow:inset 0 1px 0 #dcdcdc;"></div>
<svg class="b" style="left:755.5px;top:383.40000000000003px;" width="8.4" height="6" viewBox="0 0 8.4 6"><path d="M0.8 1l3.4 3.4L7.6 1" fill="none" stroke="#444" stroke-width="1.1"/></svg>
<span class="t" style="left:539.20px;top:379.00px;font-size:10.5px;color:#222;transform:matrix(0.9274,0.0005,0,1,0,0.93);transform-origin:0 50%;">Include</span>
<span class="t" style="left:430.90px;top:400.00px;font-size:10.5px;color:#2b2b2b;transform:matrix(0.9086,0.0005,0,1,0,0.73);transform-origin:0 50%;">Dimensions:</span>
<div class="b" style="left:537px;top:397px;width:321px;height:19px;background:#efefef;border:1px solid #a0a0a0;box-sizing:border-box;box-shadow:inset 0 1px 0 #dcdcdc;"></div>
<div class="b" style="left:861px;top:399px;width:17.5px;height:16.5px;background:#fff;border:1px solid #c0c0c0;box-sizing:border-box;"></div>
<span class="t" style="left:865.90px;top:403.00px;font-size:10.5px;color:#222;transform:matrix(0.9925,0.0005,0,1,0,0.62);transform-origin:0 50%;font-weight:bold;">...</span>
<span class="t" style="left:425.90px;top:420.00px;font-size:10.5px;color:#222;transform:matrix(0.9008,0.0005,0,1,0,0.32);transform-origin:0 50%;font-weight:bold;">Copy to</span>
<span class="t" style="left:430.90px;top:437.00px;font-size:10.5px;color:#2b2b2b;transform:matrix(0.9192,0.0005,0,1,0,0.83);transform-origin:0 50%;">Budget Name:</span>
<div class="b" style="left:537px;top:434px;width:118px;height:19px;background:#fff;border:1px solid #9a9a9a;box-sizing:border-box;box-shadow:inset 0 1px 0 #dcdcdc;"></div>
<svg class="b" style="left:643.5px;top:441.3px;" width="8.4" height="6" viewBox="0 0 8.4 6"><path d="M0.8 1l3.4 3.4L7.6 1" fill="none" stroke="#444" stroke-width="1.1"/></svg>
<span class="t" style="left:539.20px;top:437.00px;font-size:10.5px;color:#222;transform:matrix(0.8441,0.0005,0,1,0,0.83);transform-origin:0 50%;">2019NEW</span>
<span class="t" style="left:430.90px;top:458.00px;font-size:10.5px;color:#2b2b2b;transform:matrix(0.9430,0.0005,0,1,0,0.63);transform-origin:0 50%;">G/L Account No.:</span>
<div class="b" style="left:537px;top:455px;width:230px;height:19px;background:#fff;border:1px solid #9a9a9a;box-sizing:border-box;box-shadow:inset 0 1px 0 #dcdcdc;"></div>
<svg class="b" style="left:755.5px;top:462.1px;" width="8.4" height="6" viewBox="0 0 8.4 6"><path d="M0.8 1l3.4 3.4L7.6 1" fill="none" stroke="#444" stroke-width="1.1"/></svg>
<span class="t" style="left:425.90px;top:478.00px;font-size:10.5px;color:#222;transform:matrix(0.8981,0.0005,0,1,0,0.32);transform-origin:0 50%;font-weight:bold;">Apply</span>
<span class="t" style="left:430.90px;top:495.00px;font-size:10.5px;color:#2b2b2b;transform:matrix(0.9214,0.0005,0,1,0,0.53);transform-origin:0 50%;">Adjustment Factor:</span>
<div class="b" style="left:537px;top:492px;width:230px;height:19px;background:#fff;border:1px solid #9a9a9a;box-sizing:border-box;box-shadow:inset 0 1px 0 #dcdcdc;"></div>
<span class="t" style="left:757.66px;top:495.00px;font-size:10.5px;color:#222;transform:matrix(0.9000,0.0005,0,1,0,0.33);transform-origin:100% 50%;">1</span>
<span class="t" style="left:430.90px;top:516.00px;font-size:10.5px;color:#2b2b2b;transform:matrix(0.8822,0.0005,0,1,0,0.33);transform-origin:0 50%;">Rounding Method:</span>
<div class="b" style="left:537px;top:513px;width:118px;height:19px;background:#fff;border:1px solid #9a9a9a;box-sizing:border-box;box-shadow:inset 0 1px 0 #dcdcdc;"></div>
<svg class="b" style="left:643.5px;top:519.8000000000001px;" width="8.4" height="6" viewBox="0 0 8.4 6"><path d="M0.8 1l3.4 3.4L7.6 1" fill="none" stroke="#444" stroke-width="1.1"/></svg>
<span class="t" style="left:539.20px;top:516.00px;font-size:10.5px;color:#222;transform:matrix(0.8620,0.0005,0,1,0,0.33);transform-origin:0 50%;">WHOLE</span>
<span class="t" style="left:430.90px;top:537.00px;font-size:10.5px;color:#2b2b2b;transform:matrix(0.8961,0.0005,0,1,0,0.13);transform-origin:0 50%;">Date Change Formula:</span>
<div class="b" style="left:537px;top:534px;width:230px;height:18px;background:#fff;border:1px solid #9a9a9a;box-sizing:border-box;box-shadow:inset 0 1px 0 #dcdcdc;"></div>
<span class="t" style="left:539.20px;top:537.00px;font-size:10.5px;color:#222;transform:matrix(0.8097,0.0005,0,1,0,0.13);transform-origin:0 50%;">1Y</span>
<span class="t" style="left:430.90px;top:557.00px;font-size:10.5px;color:#2b2b2b;transform:matrix(0.8868,0.0005,0,1,0,0.43);transform-origin:0 50%;">Date Compression:</span>
<div class="b" style="left:537px;top:554.3px;width:229.5px;height:18.200000000000045px;background:#fff;border:1px solid #9cc3ea;box-sizing:border-box;"></div>
<svg class="b" style="left:755px;top:561.2px;" width="8.4" height="6" viewBox="0 0 8.4 6"><path d="M0.8 1l3.4 3.4L7.6 1" fill="none" stroke="#444" stroke-width="1.1"/></svg>
<div class="b" style="left:538.8px;top:557px;width:29.5px;height:11.600000000000023px;background:#1264c6;"></div>
<span class="t" style="left:539.00px;top:557.00px;font-size:10.5px;color:#fff;transform:matrix(0.9970,0.0005,0,1,0,0.43);transform-origin:0 50%;">Month</span>
<div class="b" style="left:790px;top:632px;width:58px;height:18px;background:#dcecf9;border:1px solid #3c80b8;box-sizing:border-box;"></div>
<span class="t" style="left:811.70px;top:635.00px;font-size:10.5px;color:#111;transform:matrix(0.8503,0.0005,0,1,0,0.33);transform-origin:0 50%;">OK</span>
<div class="b" style="left:854px;top:632px;width:59px;height:18px;background:#e1e1e1;border:1px solid #adadad;box-sizing:border-box;"></div>
<span class="t" style="left:868.40px;top:635.00px;font-size:10.5px;color:#111;transform:matrix(0.9178,0.0005,0,1,0,0.33);transform-origin:0 50%;">Cancel</span>
<div class="b" style="left:819px;top:658px;width:75.5px;height:15.5px;background:#fff;border:1px solid #979797;box-sizing:border-box;box-shadow:1px 1px 1px rgba(0,0,0,.12);"></div>
<span class="t" style="left:823.40px;top:659.00px;font-size:10.5px;color:#575757;transform:matrix(0.9045,0.0005,0,1,0,0.93);transform-origin:0 50%;">OK (Ctrl+Enter)</span>
<svg class="b" style="left:818.5px;top:642.5px;" width="12" height="17" viewBox="0 0 12 17"><path d="M1 1v11.6l2.7-2.5 2 4.6 1.9-.8-2-4.5h3.7z" fill="#fff" stroke="#000" stroke-width=".9" stroke-linejoin="round"/></svg>
</div>
</body></html>
